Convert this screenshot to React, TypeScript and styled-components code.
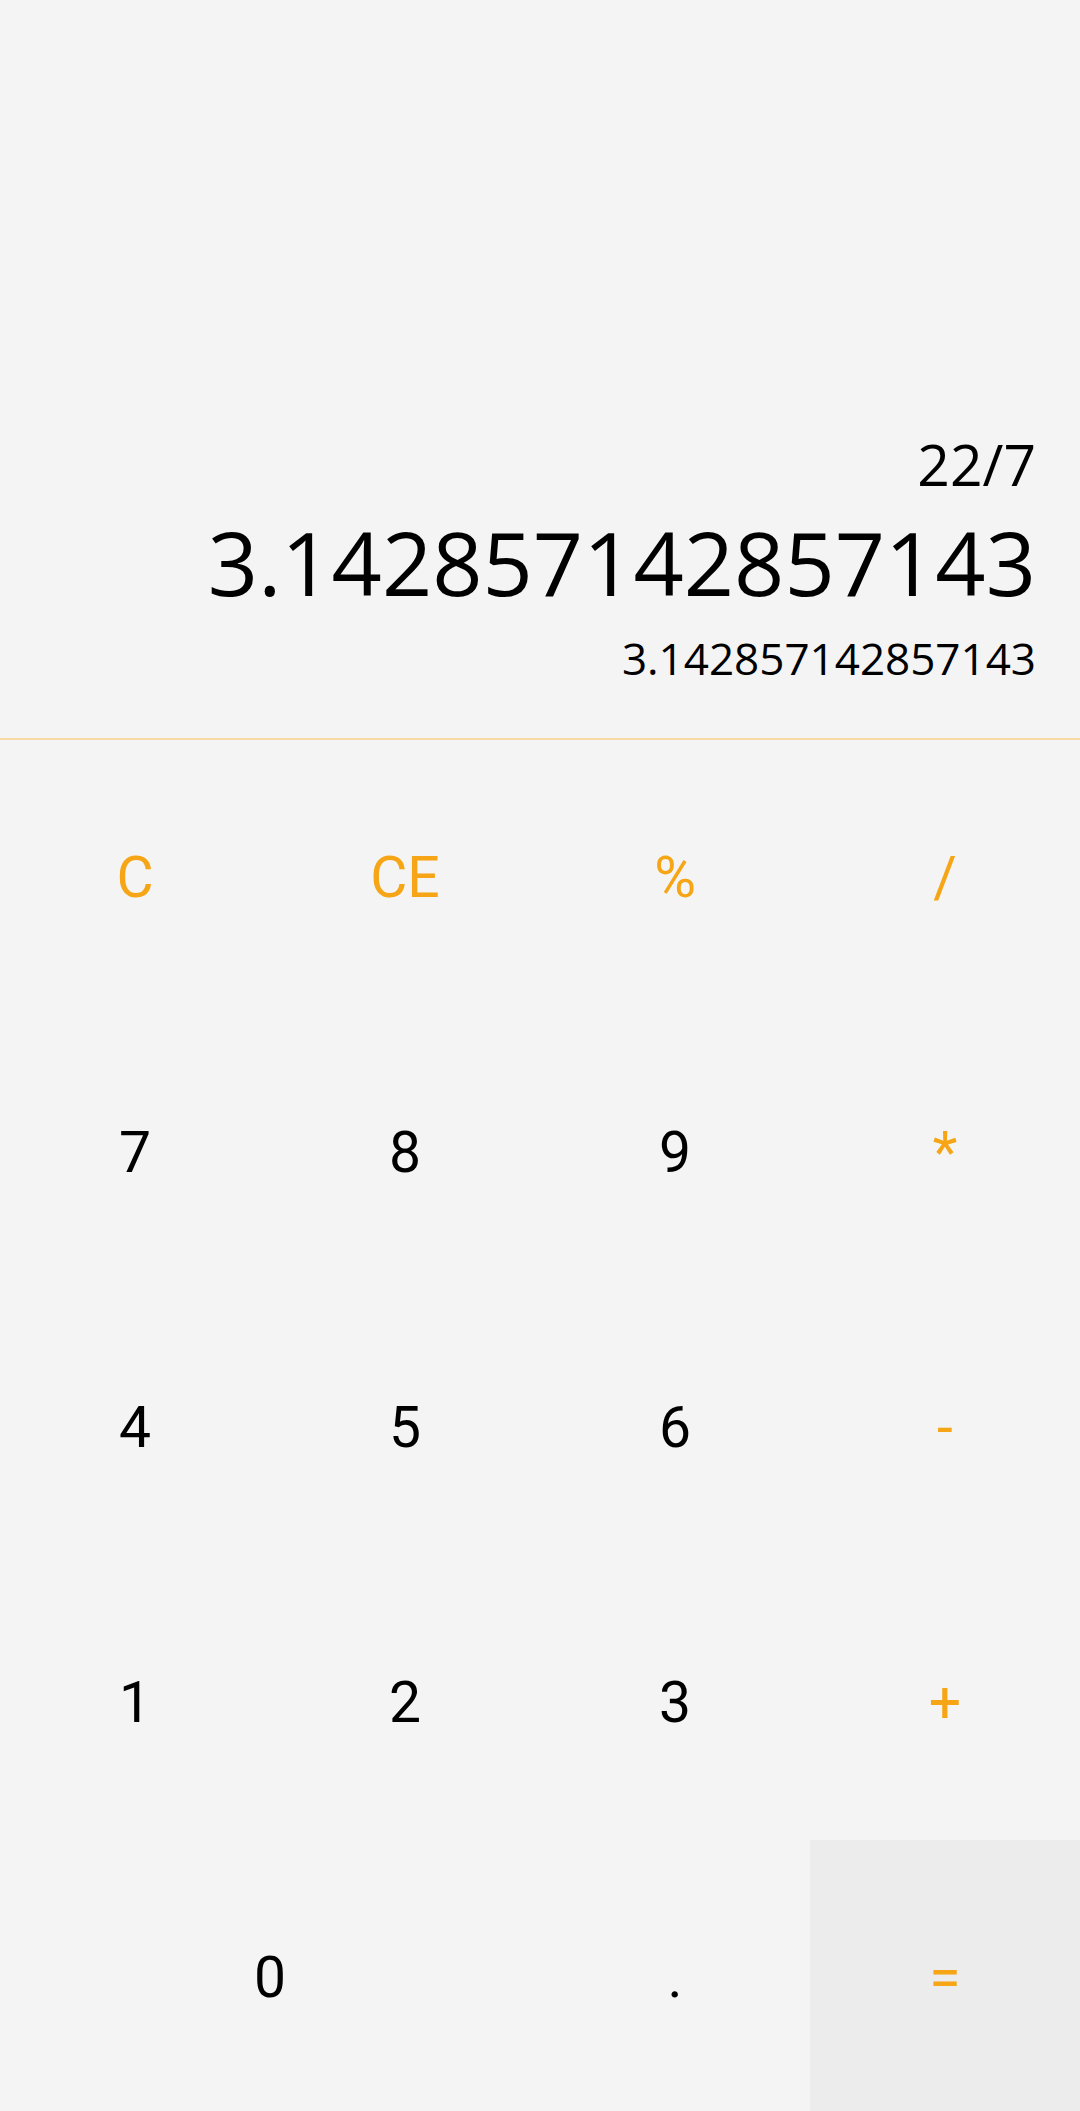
import React from "react";
import styled, { createGlobalStyle } from "styled-components";

const Global = createGlobalStyle`
  html, body { margin: 0; padding: 0; background: #f4f4f4; }
  #root { width: 1080px; height: 2111px; }
`;

const Page = styled.div`
  width: 1080px;
  height: 2111px;
  display: flex;
  flex-direction: column;
  background: #f4f4f4;
  overflow: hidden;
`;

const Display = styled.div`
  height: 740px;
  flex: none;
  box-sizing: border-box;
  display: flex;
  flex-direction: column;
  justify-content: flex-end;
  align-items: flex-end;
  padding: 0 44px 58px 40px;
  border-bottom: 2px solid #f8dba4;
  font-family: "Open Sans", "Noto Sans", sans-serif;
  color: #000;
`;

const Expression = styled.div`
  font-size: 57px;
  line-height: 57px;
  margin-bottom: 25px;
`;

const Result = styled.div`
  font-size: 88px;
  line-height: 88px;
  margin-bottom: 30px;
`;

const Preview = styled.div`
  font-size: 44px;
  line-height: 44px;
`;

const Keypad = styled.div`
  flex: none;
  display: grid;
  grid-template-columns: repeat(4, 1fr);
  grid-template-rows: repeat(5, 275px);
`;

const Key = styled.button<{ $accent?: boolean; $wide?: boolean; $shade?: boolean }>`
  border: none;
  margin: 0;
  padding: 0;
  display: flex;
  align-items: center;
  justify-content: center;
  font-family: Roboto, "Noto Sans", sans-serif;
  font-size: 57px;
  font-weight: 400;
  color: ${(p) => (p.$accent ? "#f5a516" : "#000")};
  background: ${(p) => (p.$shade ? "#ececec" : "transparent")};
  grid-column: ${(p) => (p.$wide ? "span 2" : "auto")};
`;

type K = { label: string; accent?: boolean; wide?: boolean; shade?: boolean };

const keys: K[] = [
  { label: "C", accent: true },
  { label: "CE", accent: true },
  { label: "%", accent: true },
  { label: "/", accent: true },
  { label: "7" },
  { label: "8" },
  { label: "9" },
  { label: "*", accent: true },
  { label: "4" },
  { label: "5" },
  { label: "6" },
  { label: "-", accent: true },
  { label: "1" },
  { label: "2" },
  { label: "3" },
  { label: "+", accent: true },
  { label: "0", wide: true },
  { label: "." },
  { label: "=", accent: true, shade: true },
];

export default function App() {
  return (
    <Page>
      <Global />
      <Display>
        <Expression>22/7</Expression>
        <Result>3.142857142857143</Result>
        <Preview>3.142857142857143</Preview>
      </Display>
      <Keypad>
        {keys.map((k) => (
          <Key key={k.label} $accent={k.accent} $wide={k.wide} $shade={k.shade}>
            {k.label}
          </Key>
        ))}
      </Keypad>
    </Page>
  );
}
